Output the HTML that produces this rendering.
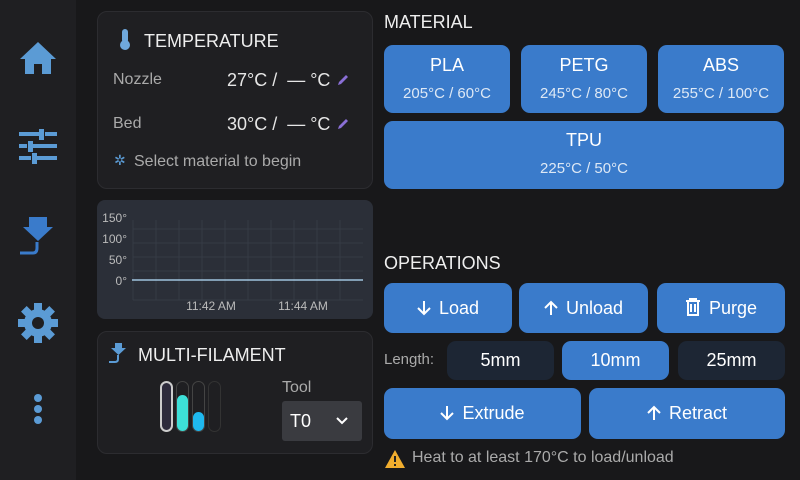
<!DOCTYPE html><html><head><style>
*{box-sizing:border-box;margin:0;padding:0}
body{width:800px;height:480px;background:#18181a;font-family:"Liberation Sans",sans-serif;color:#e6e6e6;position:relative;overflow:hidden}
.a{position:absolute}
.side{left:0;top:0;width:76px;height:480px;background:#1f1f22}
.card{background:#1f1f22;border:1px solid #2c2c30;border-radius:10px}
.btn{position:absolute;background:#3a7bcb;border-radius:9px;color:#fff;text-align:center;font-size:18px}
.dk{background:#1d2634}
.h{font-size:18px;color:#eee}
.ar{vertical-align:-2px;margin-right:8px}
</style></head><body>
<div class="a side"></div>
<svg class="a" style="left:18px;top:40px" width="40" height="36" viewBox="0 0 40 36"><path d="M20 2 L38 19 H33 V34 H24 V24 H16 V34 H7 V19 H2Z" fill="#5b9bd5"/></svg>
<svg class="a" style="left:19px;top:129px" width="38" height="36" viewBox="0 0 38 36" fill="#5b9bd5"><rect x="0" y="3" width="20" height="4"/><rect x="26" y="3" width="12" height="4"/><rect x="20" y="0" width="5" height="11"/><rect x="0" y="15" width="8" height="4"/><rect x="14" y="15" width="24" height="4"/><rect x="9" y="12" width="5" height="11"/><rect x="0" y="27" width="12" height="4"/><rect x="18" y="27" width="20" height="4"/><rect x="13" y="24" width="5" height="11"/></svg>
<svg class="a" style="left:17px;top:215px" width="40" height="42" viewBox="0 0 40 42"><path d="M12 2 H30 V12 H36 L21 26 L6 12 H12Z" fill="#3a7bcb"/><path d="M3 38 H16 Q20 38 20 33 V27" stroke="#3a7bcb" stroke-width="3" fill="none"/></svg>
<svg class="a" style="left:17px;top:302px" width="42" height="42" viewBox="-21 -21 42 42"><g fill="#5b9bd5"><circle r="14"/><g id="t"><rect x="-4" y="-20" width="8" height="8"/></g><use href="#t" transform="rotate(45)"/><use href="#t" transform="rotate(90)"/><use href="#t" transform="rotate(135)"/><use href="#t" transform="rotate(180)"/><use href="#t" transform="rotate(225)"/><use href="#t" transform="rotate(270)"/><use href="#t" transform="rotate(315)"/></g><circle r="6" fill="#1f1f22"/></svg>
<svg class="a" style="left:33px;top:393px" width="10" height="36"><circle cx="5" cy="5" r="4" fill="#5b9bd5"/><circle cx="5" cy="16" r="4" fill="#5b9bd5"/><circle cx="5" cy="27" r="4" fill="#5b9bd5"/></svg>

<div class="a card" style="left:97px;top:11px;width:276px;height:178px"></div>
<svg class="a" style="left:119px;top:29px" width="12" height="22"><rect x="3" y="0" width="6" height="14" rx="3" fill="#6fa8dc"/><circle cx="6" cy="16" r="5" fill="#6fa8dc"/></svg>
<div class="a h" style="left:144px;top:31px">TEMPERATURE</div>
<div class="a" style="left:113px;top:71px;font-size:16px;color:#aaa">Nozzle</div>
<div class="a" style="left:227px;top:70px;font-size:18px">27°C /&nbsp; — °C</div>
<div class="a" style="left:113px;top:115px;font-size:16px;color:#aaa">Bed</div>
<div class="a" style="left:227px;top:114px;font-size:18px">30°C /&nbsp; — °C</div>
<svg class="a" style="left:336px;top:73px" width="14" height="14"><path d="M2 12 L3 9 L10 2 L12 4 L5 11Z" fill="#8a6fd6"/></svg>
<svg class="a" style="left:336px;top:117px" width="14" height="14"><path d="M2 12 L3 9 L10 2 L12 4 L5 11Z" fill="#8a6fd6"/></svg>
<div class="a" style="left:114px;top:152px;font-size:14px;color:#5b9bd5">✲</div>
<div class="a" style="left:134px;top:153px;font-size:16px;color:#aaa">Select material to begin</div>

<div class="a" style="left:97px;top:200px;width:276px;height:119px;background:#2b2f38;border-radius:8px"></div>
<svg class="a" style="left:97px;top:200px" width="276" height="119" viewBox="0 0 276 119" font-family="Liberation Sans" font-size="12" fill="#bbb">
<g stroke="#363b45" stroke-width="1"><line x1="36" y1="29" x2="266" y2="29"/><line x1="36" y1="43" x2="266" y2="43"/><line x1="36" y1="57" x2="266" y2="57"/><line x1="36" y1="71" x2="266" y2="71"/><line x1="36" y1="100" x2="266" y2="100"/>
<line x1="36" y1="20" x2="36" y2="100"/><line x1="59" y1="20" x2="59" y2="100"/><line x1="82" y1="20" x2="82" y2="100"/><line x1="105" y1="20" x2="105" y2="100"/><line x1="128" y1="20" x2="128" y2="100"/><line x1="151" y1="20" x2="151" y2="100"/><line x1="174" y1="20" x2="174" y2="100"/><line x1="197" y1="20" x2="197" y2="100"/><line x1="220" y1="20" x2="220" y2="100"/><line x1="243" y1="20" x2="243" y2="100"/></g>
<line x1="35" y1="80" x2="266" y2="80" stroke="#9fc4de" stroke-width="1.5"/>
<text x="30" y="22" text-anchor="end">150°</text><text x="30" y="43" text-anchor="end">100°</text><text x="30" y="64" text-anchor="end">50°</text><text x="30" y="85" text-anchor="end">0°</text>
<text x="114" y="110" text-anchor="middle">11:42 AM</text><text x="206" y="110" text-anchor="middle">11:44 AM</text></svg>

<div class="a card" style="left:97px;top:331px;width:276px;height:123px"></div>
<svg class="a" style="left:108px;top:342px" width="20" height="22"><path d="M7 1 H14 V6 H18 L10.5 13 L3 6 H7Z" fill="#5b9bd5"/><path d="M1 20 H7 Q10 20 10 17 V13" stroke="#5b9bd5" stroke-width="2" fill="none"/></svg>
<div class="a h" style="left:138px;top:345px">MULTI-FILAMENT</div>
<div class="a" style="left:160px;top:381px;width:13px;height:51px;border:2px solid #ccc;border-radius:7px;background:#2d2b3c"></div>
<div class="a" style="left:176px;top:381px;width:13px;height:51px;border:1px solid #444;border-radius:7px"></div>
<div class="a" style="left:177px;top:395px;width:11px;height:36px;border-radius:6px;background:#3de0d8"></div>
<div class="a" style="left:192px;top:381px;width:13px;height:51px;border:1px solid #444;border-radius:7px"></div>
<div class="a" style="left:193px;top:412px;width:11px;height:19px;border-radius:6px;background:#1fb8ee"></div>
<div class="a" style="left:208px;top:381px;width:13px;height:51px;border:1px solid #333;border-radius:7px"></div>
<div class="a" style="left:282px;top:379px;font-size:16px;color:#aaa">Tool</div>
<div class="a" style="left:282px;top:401px;width:80px;height:40px;background:#3a3b40;border-radius:3px"></div>
<div class="a" style="left:290px;top:411px;font-size:18px;color:#fff">T0</div>
<svg class="a" style="left:336px;top:416px" width="12" height="10"><path d="M1 2 L6 7 L11 2" stroke="#fff" stroke-width="2" fill="none"/></svg>

<div class="a h" style="left:384px;top:12px">MATERIAL</div>
<div class="btn" style="left:384px;top:45px;width:126px;height:68px"><div style="margin-top:10px">PLA</div><div style="font-size:15px;margin-top:9px;color:#dde8f5">205°C / 60°C</div></div>
<div class="btn" style="left:521px;top:45px;width:126px;height:68px"><div style="margin-top:10px">PETG</div><div style="font-size:15px;margin-top:9px;color:#dde8f5">245°C / 80°C</div></div>
<div class="btn" style="left:658px;top:45px;width:126px;height:68px"><div style="margin-top:10px">ABS</div><div style="font-size:15px;margin-top:9px;color:#dde8f5">255°C / 100°C</div></div>
<div class="btn" style="left:384px;top:121px;width:400px;height:68px"><div style="margin-top:9px">TPU</div><div style="font-size:15px;margin-top:9px;color:#dde8f5">225°C / 50°C</div></div>

<div class="a h" style="left:384px;top:253px">OPERATIONS</div>
<div class="btn" style="left:384px;top:283px;width:128px;height:50px;line-height:50px"><svg class="ar" width="14" height="16"><path d="M7 1 V14 M1 8 L7 14 L13 8" stroke="#fff" stroke-width="2" fill="none"/></svg>Load</div>
<div class="btn" style="left:519px;top:283px;width:129px;height:50px;line-height:50px"><svg class="ar" width="14" height="16"><path d="M7 15 V2 M1 8 L7 2 L13 8" stroke="#fff" stroke-width="2" fill="none"/></svg>Unload</div>
<div class="btn" style="left:657px;top:283px;width:128px;height:50px;line-height:50px"><svg width="16" height="18" style="vertical-align:-2px;margin-right:8px"><path d="M1 3 H15 M5 3 V1 H11 V3 M3 3 V17 H13 V3 M6 6 V14 M10 6 V14" stroke="#fff" stroke-width="2" fill="none"/></svg>Purge</div>
<div class="a" style="left:384px;top:351px;font-size:15px;color:#aaa">Length:</div>
<div class="btn dk" style="left:447px;top:341px;width:107px;height:39px;line-height:39px">5mm</div>
<div class="btn" style="left:562px;top:341px;width:107px;height:39px;line-height:39px">10mm</div>
<div class="btn dk" style="left:678px;top:341px;width:107px;height:39px;line-height:39px">25mm</div>
<div class="btn" style="left:384px;top:388px;width:197px;height:51px;line-height:51px"><svg class="ar" width="14" height="16"><path d="M7 1 V14 M1 8 L7 14 L13 8" stroke="#fff" stroke-width="2" fill="none"/></svg>Extrude</div>
<div class="btn" style="left:589px;top:388px;width:196px;height:51px;line-height:51px"><svg class="ar" width="14" height="16"><path d="M7 15 V2 M1 8 L7 2 L13 8" stroke="#fff" stroke-width="2" fill="none"/></svg>Retract</div>
<svg class="a" style="left:384px;top:449px" width="22" height="20"><path d="M11 1 L21 19 H1Z" fill="#f0ad2e"/><rect x="10" y="7" width="2" height="6" fill="#222"/><rect x="10" y="15" width="2" height="2" fill="#222"/></svg>
<div class="a" style="left:412px;top:449px;font-size:16px;color:#aaa">Heat to at least 170°C to load/unload</div>
</body></html>
